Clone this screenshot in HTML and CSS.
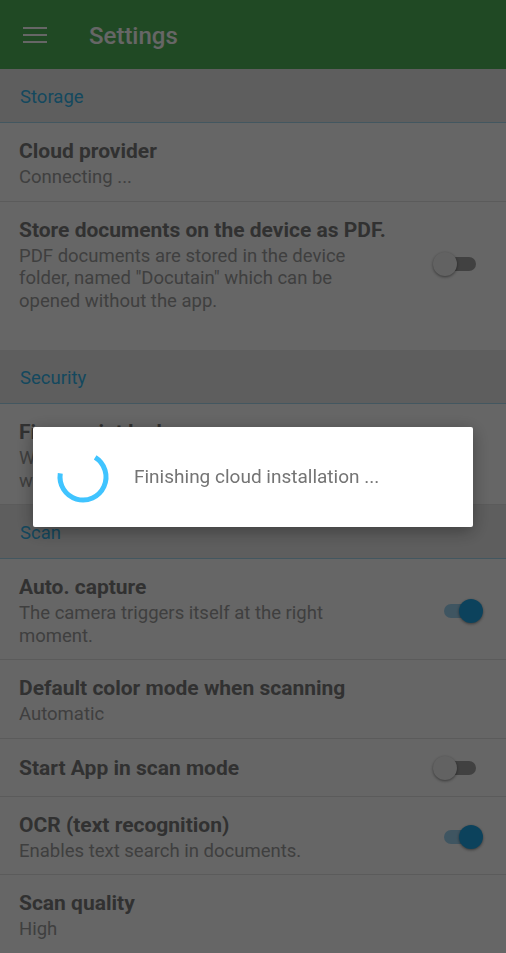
FILE: index.html
```html
<!DOCTYPE html>
<html lang="en">
<head>
    <meta charset="UTF-8">
    <title>Settings</title>
    <link rel="stylesheet" href="styles.css">
</head>
<body>
<header class="toolbar">
    <svg class="menu-icon" width="24" height="18" viewBox="0 0 24 18">
        <rect x="0" y="1" width="24" height="2"/>
        <rect x="0" y="8" width="24" height="2"/>
        <rect x="0" y="15" width="24" height="2"/>
    </svg>
    <h1 class="toolbar-title">Settings</h1>
</header>

<main class="prefs">
    <div class="category">Storage</div>
    <div class="pref">
        <div class="pref-text">
            <div class="pref-title">Cloud provider</div>
            <div class="pref-summary">Connecting ...</div>
        </div>
    </div>
    <div class="pref pref-last">
        <div class="pref-text">
            <div class="pref-title">Store documents on the device as PDF.</div>
            <div class="pref-summary">PDF documents are stored in the device folder, named "Docutain" which can be opened without the app.</div>
        </div>
        <div class="switch"><div class="switch-track"></div><div class="switch-thumb"></div></div>
    </div>

    <div class="category">Security</div>
    <div class="pref">
        <div class="pref-text">
            <div class="pref-title">Fingerprint lock</div>
            <div class="pref-summary">When activated, the fingerprint is needed whenever the app is opened.</div>
        </div>
    </div>

    <div class="category">Scan</div>
    <div class="pref">
        <div class="pref-text">
            <div class="pref-title">Auto. capture</div>
            <div class="pref-summary">The camera triggers itself at the right moment.</div>
        </div>
        <div class="switch on"><div class="switch-track"></div><div class="switch-thumb"></div></div>
    </div>
    <div class="pref">
        <div class="pref-text">
            <div class="pref-title">Default color mode when scanning</div>
            <div class="pref-summary">Automatic</div>
        </div>
    </div>
    <div class="pref pref-single">
        <div class="pref-text">
            <div class="pref-title">Start App in scan mode</div>
        </div>
        <div class="switch"><div class="switch-track"></div><div class="switch-thumb"></div></div>
    </div>
    <div class="pref">
        <div class="pref-text">
            <div class="pref-title">OCR (text recognition)</div>
            <div class="pref-summary">Enables text search in documents.</div>
        </div>
        <div class="switch on"><div class="switch-track"></div><div class="switch-thumb"></div></div>
    </div>
    <div class="pref">
        <div class="pref-text">
            <div class="pref-title">Scan quality</div>
            <div class="pref-summary">High</div>
        </div>
    </div>
</main>

<div class="scrim">
    <div class="dialog">
        <svg class="spinner" width="56" height="56" viewBox="0 0 56 56">
            <path d="M40.19 8.49 A23 23 0 1 1 5.28 24.4" fill="none" stroke="#40c4ff" stroke-width="5"/>
        </svg>
        <p class="dialog-text">Finishing cloud installation ...</p>
    </div>
</div>
</body>
</html>
```

FILE: styles.css
```css
html, body {
    margin: 0;
    height: 100%;
    overflow: hidden;
}
body {
    font-family: Roboto, "Liberation Sans", sans-serif;
    background-color: #ffffff;
}

/* app bar */
.toolbar {
    height: 69px;
    background-color: #52b65a;
    display: flex;
    align-items: center;
    padding-left: 23px;
    box-sizing: border-box;
}
.menu-icon {
    fill: #ffffff;
}
.toolbar-title {
    margin: 2px 0 0 42px;
    font-size: 24px;
    font-weight: 500;
    color: #ffffff;
}

/* preference list */
.category {
    height: 50px;
    line-height: 50px;
    padding: 3px 0 0 20px;
    font-size: 18.5px;
    color: #33b5ec;
    background-color: #ebebeb;
    border-bottom: 1px solid #a9d9f0;
}
.pref {
    display: flex;
    align-items: center;
    padding: 15px 23px 12px 19px;
    border-bottom: 1px solid #e4e4e4;
}
.pref-last {
    padding-bottom: 38px;
    border-bottom: none;
}
.pref-single {
    min-height: 30px;
    padding-top: 14px;
    padding-bottom: 13px;
}
.pref-text {
    flex: 1;
    min-width: 0;
    padding-right: 24px;
}
.pref-title {
    font-size: 21px;
    line-height: 26px;
    font-weight: 700;
    color: #7c7c7c;
    white-space: nowrap;
}
.pref-summary {
    margin-top: 2px;
    padding-right: 24px;
    font-size: 18.5px;
    line-height: 22.5px;
    color: #9e9e9e;
}

/* toggle */
.switch {
    position: relative;
    width: 50px;
    height: 24px;
    flex-shrink: 0;
}
.switch-track {
    position: absolute;
    left: 5px;
    top: 5px;
    width: 38px;
    height: 14px;
    border-radius: 7px;
    background-color: #a2a2a2;
}
.switch-thumb {
    position: absolute;
    left: 0;
    top: 0;
    width: 24px;
    height: 24px;
    border-radius: 50%;
    background-color: #f4f4f4;
    box-shadow: 0 1px 3px rgba(0, 0, 0, 0.45);
}
.switch.on .switch-track {
    left: 11px;
    background-color: #9fd4f2;
}
.switch.on .switch-thumb {
    left: 26px;
    background-color: #1fa6e6;
}

/* progress dialog */
.scrim {
    position: fixed;
    inset: 0;
    background-color: rgba(0, 0, 0, 0.6);
    display: flex;
    align-items: center;
    justify-content: center;
}
.dialog {
    width: 440px;
    height: 100px;
    box-sizing: border-box;
    padding: 0 22px;
    display: flex;
    align-items: center;
    background-color: #ffffff;
    border-radius: 2px;
    box-shadow: 0 4px 18px rgba(0, 0, 0, 0.35);
}
.spinner {
    flex-shrink: 0;
}
.dialog-text {
    margin: 0 0 0 23px;
    font-size: 19px;
    color: #747474;
}
```
